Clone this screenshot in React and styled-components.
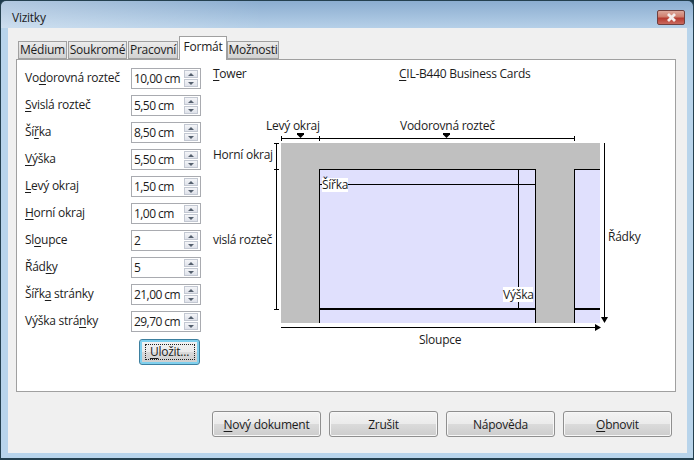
import React from 'react';
import styled, { createGlobalStyle } from 'styled-components';

const GlobalStyle = createGlobalStyle`
  html, body {
    margin: 0;
    padding: 0;
    width: 694px;
    height: 460px;
    overflow: hidden;
    background: #1c3a4c;
  }
`;

const Frame = styled.div`
  box-sizing: border-box;
  width: 694px;
  height: 460px;
  display: flex;
  flex-direction: column;
  border: 1px solid #24404f;
  border-bottom-width: 2px;
  border-radius: 6px 6px 0 0;
  background:
    linear-gradient(90deg, rgba(255, 255, 255, 0.32), rgba(255, 255, 255, 0) 38%) 0 0 / 100% 27px no-repeat,
    linear-gradient(#8badd0 0, #b6d0e8 27px, #b8d4eb 27px, #b8d4eb 100%);
  font-family: "Open Sans", "Noto Sans", sans-serif;
  font-size: 12px;
  letter-spacing: -0.25px;
  color: #1c1c1c;
`;

const TitleBar = styled.div`
  height: 27px;
  flex: none;
  display: flex;
  align-items: flex-start;
  justify-content: space-between;
  padding-left: 11px;
  padding-right: 8px;
`;

const Title = styled.div`
  margin-top: 9px;
  line-height: 16px;
`;

const CloseButton = styled.div`
  width: 28px;
  height: 15px;
  margin-top: 9px;
  box-sizing: border-box;
  border: 1px solid #6f3f3e;
  border-radius: 2px;
  background: linear-gradient(#dca79b 0, #cf7d6d 45%, #b53a30 55%, #c9695e 100%);
  display: flex;
  align-items: center;
  justify-content: center;
`;

const Client = styled.div`
  flex: 1;
  margin: 0 6px 5px 7px;
  background: #f0f0f0;
  display: flex;
  flex-direction: column;
  padding: 8px 9px 0 8px;
`;

const TabStrip = styled.div`
  display: flex;
  align-items: flex-end;
  height: 23px;
  padding-left: 2px;
  position: relative;
  z-index: 1;
`;

const Tab = styled.div`
  box-sizing: border-box;
  height: ${p => (p.$active ? '24px' : '18px')};
  margin-bottom: ${p => (p.$active ? '-1px' : '0')};
  margin-right: ${p => (p.$active ? '0' : '1px')};
  width: ${p => p.$w}px;
  border: 1px solid #a0a0a0;
  border-bottom: ${p => (p.$active ? 'none' : '1px solid #a0a0a0')};
  background: ${p => (p.$active ? '#fff' : 'linear-gradient(#ececec, #d2d2d2)')};
  text-align: center;
  line-height: ${p => (p.$active ? '20px' : '16px')};
  white-space: nowrap;
`;

const Panel = styled.div`
  box-sizing: border-box;
  width: 660px;
  height: 333px;
  border: 1px solid #a0a0a0;
  background: #fff;
  display: flex;
`;

const FormColumn = styled.div`
  width: 191px;
  flex: none;
  padding: 8px 7px 0 8px;
  box-sizing: border-box;
  display: flex;
  flex-direction: column;
`;

const Row = styled.div`
  height: 21px;
  margin-bottom: 6px;
  display: flex;
  align-items: center;
  justify-content: space-between;
`;

const RowLabel = styled.span`
  white-space: nowrap;
  padding-bottom: 2px;
`;

const Spin = styled.div`
  box-sizing: border-box;
  width: 70px;
  height: 21px;
  border: 1px solid #a9abb0;
  display: flex;
  align-items: center;
  justify-content: space-between;
  padding: 0 2px 0 2px;
`;

const SpinValue = styled.span`
  white-space: nowrap;
  letter-spacing: -0.55px;
  padding-bottom: 1px;
`;

const SpinButtons = styled.div`
  width: 14px;
  height: 17px;
  flex: none;
  display: flex;
  flex-direction: column;
  gap: 1px;
`;

const SpinArrow = styled.div`
  flex: 1;
  box-sizing: border-box;
  border: 1px solid #c3c8d2;
  background: linear-gradient(#f4f5f8, #dfe2ea);
  display: flex;
  align-items: center;
  justify-content: center;
  &::after {
    content: '';
    width: 0;
    height: 0;
    border-left: 3px solid transparent;
    border-right: 3px solid transparent;
    ${p => (p.$down ? 'border-top: 3px solid #55606e;' : 'border-bottom: 3px solid #55606e;')}
  }
`;

const SaveWrap = styled.div`
  display: flex;
  justify-content: flex-end;
  margin-top: 1px;
  padding-right: 1px;
`;

const Button = styled.div`
  box-sizing: border-box;
  width: ${p => p.$w}px;
  height: ${p => p.$h}px;
  border: 1px solid ${p => (p.$focus ? '#3d7f9f' : '#8f8f8f')};
  border-radius: 3px;
  background: linear-gradient(#f3f3f3 0, #ebebeb 48%, #dadada 52%, #cdcdcd 100%);
  box-shadow: ${p => (p.$focus ? 'inset 0 0 0 2px #7fd0ee' : 'inset 0 0 0 1px #f7f7f7')};
  display: flex;
  align-items: center;
  justify-content: center;
  white-space: nowrap;
`;

const SaveFocus = styled.span`
  box-sizing: border-box;
  display: block;
  width: 50px;
  height: 16px;
  line-height: 14px;
  text-align: center;
  border: 1px dotted #222;
`;

const DiagramColumn = styled.div`
  flex: 1;
  position: relative;
`;

const Footer = styled.div`
  display: flex;
  justify-content: flex-end;
  gap: 8px;
  padding: 19px 6px 0 0;
`;

const DiagramText = styled.text`
  font-family: "Open Sans", "Noto Sans", sans-serif;
  font-size: 12px;
  letter-spacing: -0.25px;
  fill: #1c1c1c;
`;

const U = styled.span`
  text-decoration: underline;
  text-underline-offset: 2px;
`;

const HeaderLabel = styled.div`
  position: absolute;
  top: 6px;
  left: ${p => p.$x}px;
  line-height: 16px;
  white-space: nowrap;
`;

const fields = [
  [<>Vo<U>d</U>orovná rozteč</>, '10,00 cm'],
  [<><U>S</U>vislá rozteč</>, '5,50 cm'],
  [<>Ší<U>ř</U>ka</>, '8,50 cm'],
  [<><U>V</U>ýška</>, '5,50 cm'],
  [<><U>L</U>evý okraj</>, '1,50 cm'],
  [<><U>H</U>orní okraj</>, '1,00 cm'],
  [<>Sl<U>o</U>upce</>, '2'],
  [<>Řád<U>k</U>y</>, '5'],
  [<>Šířk<U>a</U> stránky</>, '21,00 cm'],
  [<>Výška strá<U>n</U>ky</>, '29,70 cm'],
];

// drawn in page coordinates, the svg itself starts at 208, 60
const X = x => x - 208;
const Y = y => y - 60;

const Seg = ({ x1, y1, x2, y2, w = 1 }) => (
  <line x1={X(x1)} y1={Y(y1)} x2={X(x2)} y2={Y(y2)} stroke="#000" strokeWidth={w} />
);

const Label = ({ x, y, children }) => (
  <DiagramText x={X(x)} y={Y(y)}>{children}</DiagramText>
);

const Diagram = () => (
  <svg width="467" height="331" style={{ display: 'block' }}>
    <rect x={X(281)} y={Y(143)} width={319} height={180} fill="#c0c0c0" />
    <rect x={X(319)} y={Y(169)} width={217} height={154} fill="#e0e0fd" />
    <rect x={X(574)} y={Y(169)} width={26} height={154} fill="#e0e0fd" />

    <Seg x1={319.5} y1={169.5} x2={535.5} y2={169.5} />
    <Seg x1={319.5} y1={169} x2={319.5} y2={323} />
    <Seg x1={535.5} y1={169} x2={535.5} y2={323} />
    <Seg x1={574.5} y1={169.5} x2={600} y2={169.5} />
    <Seg x1={574.5} y1={169} x2={574.5} y2={323} />
    <Seg x1={320} y1={184.5} x2={535} y2={184.5} />
    <Seg x1={518.5} y1={170} x2={518.5} y2={309} />
    <Seg x1={320} y1={309} x2={535} y2={309} w={2} />
    <Seg x1={575} y1={309} x2={600} y2={309} w={2} />

    {/* horizontal dimension */}
    <Seg x1={281} y1={138.5} x2={574} y2={138.5} />
    <Seg x1={281.5} y1={136} x2={281.5} y2={141} />
    <Seg x1={319.5} y1={136} x2={319.5} y2={141} />
    <Seg x1={574.5} y1={136} x2={574.5} y2={141} />
    <polygon points={`${X(297)},${Y(133)} ${X(304)},${Y(133)} ${X(304)},${Y(134.5)} ${X(300.5)},${Y(138)} ${X(297)},${Y(134.5)}`} fill="#000" />
    <polygon points={`${X(443)},${Y(133)} ${X(450)},${Y(133)} ${X(450)},${Y(134.5)} ${X(446.5)},${Y(138)} ${X(443)},${Y(134.5)}`} fill="#000" />

    {/* vertical dimension */}
    <Seg x1={276.5} y1={143} x2={276.5} y2={309} />
    <Seg x1={274} y1={143.5} x2={279} y2={143.5} />
    <Seg x1={274} y1={169.5} x2={279} y2={169.5} />
    <Seg x1={274} y1={309.5} x2={279} y2={309.5} />

    {/* rows and columns arrows */}
    <Seg x1={604.5} y1={143} x2={604.5} y2={318} />
    <polygon points={`${X(601)},${Y(317)} ${X(608)},${Y(317)} ${X(604.5)},${Y(323)}`} fill="#000" />
    <Seg x1={281} y1={327.5} x2={596} y2={327.5} />
    <polygon points={`${X(595)},${Y(324)} ${X(595)},${Y(331)} ${X(601)},${Y(327.5)}`} fill="#000" />

    <Label x={266} y={130}>Levý okraj</Label>
    <Label x={400} y={130}>Vodorovná rozteč</Label>
    <Label x={213} y={159}>Horní okraj</Label>
    <Label x={213} y={244}>vislá rozteč</Label>
    <Label x={608} y={241}>Řádky</Label>
    <Label x={419} y={344}>Sloupce</Label>

    <rect x={X(322)} y={Y(178)} width={26} height={14} fill="#fff" />
    <Label x={322} y={189}>Šířka</Label>
    <rect x={X(503)} y={Y(287)} width={30} height={15} fill="#fff" />
    <Label x={503} y={299}>Výška</Label>
  </svg>
);

const App = () => (
  <>
    <GlobalStyle />
    <Frame>
      <TitleBar>
        <Title>Vizitky</Title>
        <CloseButton>
          <svg width="13" height="9" viewBox="0 0 13 9">
            <path d="M3 1 L10 8 M10 1 L3 8" stroke="#f4eceb" strokeWidth="2.8" fill="none" />
          </svg>
        </CloseButton>
      </TitleBar>
      <Client>
        <TabStrip>
          <Tab $w={49}>Médium</Tab>
          <Tab $w={59}>Soukromé</Tab>
          <Tab $w={50}>Pracovní</Tab>
          <Tab $w={48} $active>Formát</Tab>
          <Tab $w={52}>Možnosti</Tab>
        </TabStrip>
        <Panel>
          <FormColumn>
            {fields.map(([label, value], i) => (
              <Row key={i}>
                <RowLabel>{label}</RowLabel>
                <Spin>
                  <SpinValue>{value}</SpinValue>
                  <SpinButtons>
                    <SpinArrow />
                    <SpinArrow $down />
                  </SpinButtons>
                </Spin>
              </Row>
            ))}
            <SaveWrap>
              <Button $w={61} $h={26} $focus>
                <SaveFocus><U>U</U>ložit...</SaveFocus>
              </Button>
            </SaveWrap>
          </FormColumn>
          <DiagramColumn>
            <HeaderLabel $x={5}><U>T</U>ower</HeaderLabel>
            <HeaderLabel $x={191}><U>C</U>IL-B440 Business Cards</HeaderLabel>
            <Diagram />
          </DiagramColumn>
        </Panel>
        <Footer>
          <Button $w={109} $h={26}><span><U>N</U>ový dokument</span></Button>
          <Button $w={109} $h={26}>Zrušit</Button>
          <Button $w={109} $h={26}>Nápověda</Button>
          <Button $w={109} $h={26}><span><U>O</U>bnovit</span></Button>
        </Footer>
      </Client>
    </Frame>
  </>
);

export default App;
